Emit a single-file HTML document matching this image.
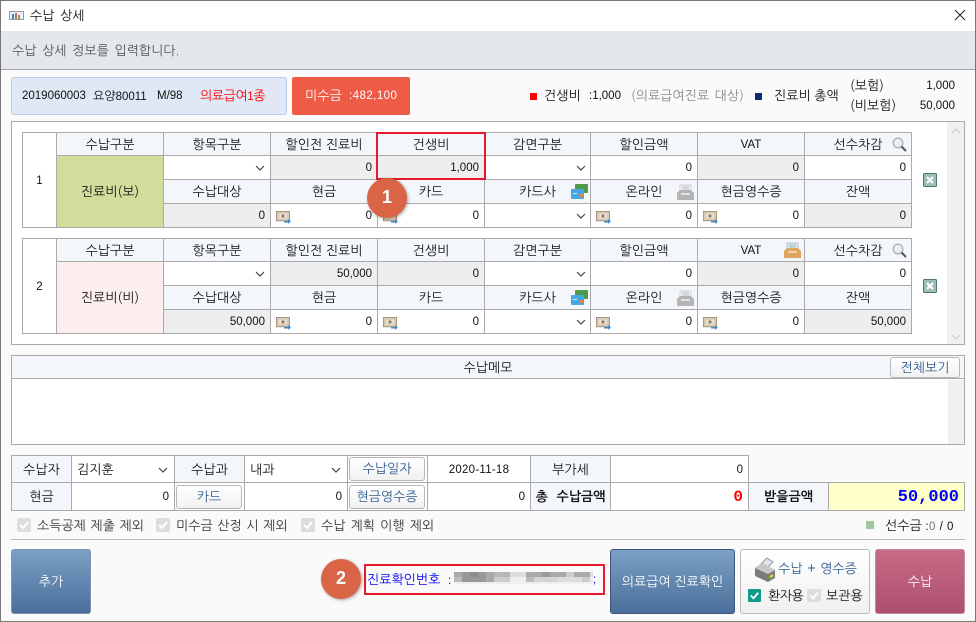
<!DOCTYPE html>
<html lang="ko"><head><meta charset="utf-8">
<style>
*{box-sizing:border-box}
html,body{margin:0;padding:0;width:976px;height:622px;overflow:hidden;background:#fafafa}
body{position:relative;font-family:"NanumGothic","Noto Sans CJK KR","Liberation Sans",sans-serif;font-size:13px;color:#111}
.t{position:absolute;white-space:nowrap;line-height:16px}
.b{position:absolute}
.n{font-family:"Liberation Sans",sans-serif;font-size:11.5px}
table{position:absolute;border-collapse:collapse;table-layout:fixed;background:#fff}
td{border:1px solid #aaa;padding:1px 0 0;text-align:center;position:relative;line-height:16px;white-space:nowrap;overflow:visible}
td.h{background:#f3f6fa}
td.g{background:#eee}
td.r{text-align:right;padding-right:5px;font-family:"Liberation Sans",sans-serif;font-size:11.5px}
svg{position:absolute;overflow:visible}
.btn{position:absolute;background:linear-gradient(#fff,#f1f1f1);border:1px solid #b8b8b8;border-radius:3px;color:#2f5a8e;text-align:center}
.big{position:absolute;top:549px;height:65px;border-radius:3px;color:#fff;text-align:center;line-height:63px}
.cb{position:absolute;width:14px;height:14px;background:#ddd;border-radius:2px}
</style></head>
<body>
<svg width="0" height="0" style="position:absolute">
<defs>
<symbol id="chev" viewBox="0 0 10 6"><path d="M1 1l4 4 4-4" fill="none" stroke="#444" stroke-width="1.2"/></symbol>
<symbol id="money" viewBox="0 0 15 13"><rect x=".4" y=".4" width="13.2" height="9.4" fill="#d6c8b2" stroke="#9c8b76" stroke-width=".8"/><rect x="3" y="2.5" width="8" height="5" fill="#e8e0d0"/><circle cx="7" cy="5" r="1.6" fill="#8f7f6d"/><path d="M8 10h4V8l3 2.6-3 2.2v-1.3H8z" fill="#3b8ad6"/></symbol>
<symbol id="card" viewBox="0 0 17 16"><rect x="4" y="0" width="13" height="9" fill="#4f9a4a" rx="1"/><rect x="0" y="5" width="13" height="10" fill="#49a6e6" rx="1"/><rect x="8" y="10" width="4" height="3" fill="#e8843a"/><rect x="2" y="9" width="4" height="1" fill="#d5ecfa"/></symbol>
<symbol id="tray" viewBox="0 0 17 17"><path d="M3 1h11v8H3z" fill="#f2f2f2" stroke="#c4c4c4" stroke-width=".7"/><path d="M5 3h7M5 5h7" stroke="#bbb"/><path d="M0 9l3-3h11l3 3v7H0z" fill="#b4b4b4"/><path d="M4 9h9v2H4z" fill="#e2e2e2"/></symbol>
<symbol id="tray2" viewBox="0 0 17 17"><path d="M3 1h11v8H3z" fill="#dfeeea" stroke="#aac" stroke-width=".7"/><path d="M5 3h7M5 5h7" stroke="#9bb"/><path d="M0 9l3-3h11l3 3v7H0z" fill="#dfa560"/><path d="M4 9h9v2H4z" fill="#f4d3a6"/></symbol>
<symbol id="mag" viewBox="0 0 15 15"><circle cx="6" cy="6" r="4.8" fill="#e8f0f6" stroke="#a8b4b4" stroke-width="1.3"/><path d="M9.5 9.5l4.5 4.5" stroke="#555" stroke-width="2"/></symbol>
<symbol id="del" viewBox="0 0 14 14"><rect x=".5" y=".5" width="13" height="13" fill="#9dbdb8" stroke="#4f736e" rx="1"/><path d="M4 4l6 6M10 4l-6 6" stroke="#fff" stroke-width="2.2"/></symbol>
<symbol id="chk" viewBox="0 0 14 14"><path d="M3 7l3 3 5-6" fill="none" stroke="#fff" stroke-width="2"/></symbol>
</defs>
</svg>

<!-- window -->
<div class="b" style="left:0;top:31px;width:976px;height:39px;background:#e4e7ec;border-bottom:1px solid #a5a5a5"></div>
<div class="b" style="left:0;top:0;width:976px;height:31px;background:#fff"></div>
<svg style="left:9px;top:11px" width="16" height="9"><rect x=".5" y=".5" width="14" height="8" fill="#eef" stroke="#999"/><rect x="3" y="3" width="2" height="5" fill="#4a7fb5"/><rect x="6" y="2" width="2" height="6" fill="#c96a5a"/><rect x="9" y="4" width="2" height="4" fill="#6aa56a"/></svg>
<div class="t" style="left:30px;top:8px;word-spacing:2px">수납 상세</div>
<svg style="left:955px;top:10px" width="10" height="10"><path d="M0 0l10 10M10 0L0 10" stroke="#222" stroke-width="1"/></svg>
<div class="t" style="left:12px;top:43px;color:#555;word-spacing:2px">수납 상세 정보를 입력합니다.</div>

<!-- patient -->
<div class="b" style="left:11px;top:77px;width:276px;height:38px;background:#dfe8f4;border:1px solid #b8cde6;border-radius:3px"></div>
<div class="t n" style="left:22px;top:88px">2019060003</div>
<div class="t" style="left:93px;top:88px;font-size:12px">요양<span class="n">80011</span></div>
<div class="t n" style="left:157px;top:88px">M/98</div>
<div class="t" style="left:200px;top:88px;color:#f00;letter-spacing:-.4px">의료급여<span class="n">1</span>종</div>
<div class="b" style="left:292px;top:77px;width:118px;height:38px;background:#ee5b47;border-radius:2px"></div>
<div class="t" style="left:305px;top:88px;color:#fff">미수금</div>
<div class="t n" style="left:349px;top:88px;color:#fff;letter-spacing:.45px">:482,100</div>

<!-- legend -->
<div class="b" style="left:530px;top:93px;width:7px;height:7px;background:#f00"></div>
<div class="t" style="left:544px;top:88px">건생비</div>
<div class="t n" style="left:589px;top:88px">:1,000</div>
<div class="t" style="left:631px;top:88px;color:#888;word-spacing:2px">(의료급여진료 대상)</div>
<div class="b" style="left:755px;top:93px;width:7px;height:7px;background:#0a2f70"></div>
<div class="t" style="left:774px;top:88px">진료비 총액</div>
<div class="t" style="left:850px;top:78px">(보험)</div>
<div class="t n" style="left:925px;top:78px;width:30px;text-align:right">1,000</div>
<div class="t" style="left:850px;top:98px">(비보험)</div>
<div class="t n" style="left:915px;top:98px;width:40px;text-align:right">50,000</div>

<!-- grid panel -->
<div class="b" style="left:11px;top:121px;width:954px;height:224px;background:#fff;border:1px solid #aaa"></div>
<div class="b" style="left:947px;top:122px;width:17px;height:222px;background:#f0f0f0"></div>
<svg style="left:952px;top:128px" width="8" height="6"><path d="M0 5l4-4 4 4" fill="none" stroke="#ccc"/></svg>
<svg style="left:952px;top:334px" width="8" height="6"><path d="M0 1l4 4 4-4" fill="none" stroke="#ccc"/></svg>

<table style="left:22px;top:132px;width:890px">
<colgroup><col style="width:34px"><col style="width:107px"><col style="width:107px"><col style="width:107px"><col style="width:107px"><col style="width:106px"><col style="width:107px"><col style="width:107px"><col style="width:107px"></colgroup>
<tr style="height:23px"><td rowspan="4" class="n">1</td><td class="h">수납구분</td><td class="h">항목구분</td><td class="h">할인전 진료비</td><td class="h">건생비</td><td class="h">감면구분</td><td class="h">할인금액</td><td class="h n">VAT</td><td class="h">선수차감<svg style="left:87px;top:4px" width="15" height="15"><use href="#mag"/></svg></td></tr>
<tr style="height:24px"><td rowspan="3" style="background:#d3dc9c">진료비(보)</td><td><svg style="left:91px;top:9px" width="10" height="6"><use href="#chev"/></svg></td><td class="g r">0</td><td class="g r">1,000</td><td><svg style="left:91px;top:9px" width="10" height="6"><use href="#chev"/></svg></td><td class="r">0</td><td class="g r">0</td><td class="r">0</td></tr>
<tr style="height:24px"><td class="h">수납대상</td><td class="h">현금</td><td class="h">카드</td><td class="h">카드사<svg style="left:86px;top:4px" width="17" height="16"><use href="#card"/></svg></td><td class="h">온라인<svg style="left:86px;top:4px" width="17" height="17"><use href="#tray"/></svg></td><td class="h">현금영수증</td><td class="h">잔액</td></tr>
<tr style="height:24px"><td class="g r">0</td><td class="r">0<svg style="left:5px;top:7px" width="15" height="13"><use href="#money"/></svg></td><td class="r">0<svg style="left:5px;top:7px" width="15" height="13"><use href="#money"/></svg></td><td><svg style="left:91px;top:9px" width="10" height="6"><use href="#chev"/></svg></td><td class="r">0<svg style="left:5px;top:7px" width="15" height="13"><use href="#money"/></svg></td><td class="r">0<svg style="left:5px;top:7px" width="15" height="13"><use href="#money"/></svg></td><td class="g r">0</td></tr>
</table>
<svg style="left:923px;top:173px" width="14" height="14"><use href="#del"/></svg>

<table style="left:22px;top:238px;width:890px">
<colgroup><col style="width:34px"><col style="width:107px"><col style="width:107px"><col style="width:107px"><col style="width:107px"><col style="width:106px"><col style="width:107px"><col style="width:107px"><col style="width:107px"></colgroup>
<tr style="height:23px"><td rowspan="4" class="n">2</td><td class="h">수납구분</td><td class="h">항목구분</td><td class="h">할인전 진료비</td><td class="h">건생비</td><td class="h">감면구분</td><td class="h">할인금액</td><td class="h"><span class="n">VAT</span><svg style="left:86px;top:3px" width="17" height="17"><use href="#tray2"/></svg></td><td class="h">선수차감<svg style="left:87px;top:4px" width="15" height="15"><use href="#mag"/></svg></td></tr>
<tr style="height:24px"><td rowspan="3" style="background:#fdeeee">진료비(비)</td><td><svg style="left:91px;top:9px" width="10" height="6"><use href="#chev"/></svg></td><td class="g r">50,000</td><td class="g r">0</td><td><svg style="left:91px;top:9px" width="10" height="6"><use href="#chev"/></svg></td><td class="r">0</td><td class="g r">0</td><td class="r">0</td></tr>
<tr style="height:24px"><td class="h">수납대상</td><td class="h">현금</td><td class="h">카드</td><td class="h">카드사<svg style="left:86px;top:4px" width="17" height="16"><use href="#card"/></svg></td><td class="h">온라인<svg style="left:86px;top:4px" width="17" height="17"><use href="#tray"/></svg></td><td class="h">현금영수증</td><td class="h">잔액</td></tr>
<tr style="height:24px"><td class="g r">50,000</td><td class="r">0<svg style="left:5px;top:7px" width="15" height="13"><use href="#money"/></svg></td><td class="r">0<svg style="left:5px;top:7px" width="15" height="13"><use href="#money"/></svg></td><td><svg style="left:91px;top:9px" width="10" height="6"><use href="#chev"/></svg></td><td class="r">0<svg style="left:5px;top:7px" width="15" height="13"><use href="#money"/></svg></td><td class="r">0<svg style="left:5px;top:7px" width="15" height="13"><use href="#money"/></svg></td><td class="g r">50,000</td></tr>
</table>
<svg style="left:923px;top:279px" width="14" height="14"><use href="#del"/></svg>

<!-- highlight 1 -->
<div class="b" style="left:376px;top:132px;width:110px;height:48px;border:2px solid #e8192c"></div>
<div class="b" style="left:367px;top:178px;width:40px;height:40px;border-radius:50%;background:#d96546;box-shadow:1px 1px 3px rgba(0,0,0,.35);color:#fff;font:bold 18px/38px 'Liberation Sans',sans-serif;text-align:center">1</div>

<!-- memo -->
<div class="b" style="left:11px;top:355px;width:954px;height:90px;background:#fff;border:1px solid #aaa"></div>
<div class="b" style="left:12px;top:356px;width:952px;height:23px;background:#f3f6fa;border-bottom:1px solid #aaa;text-align:center;line-height:23px">수납메모</div>
<div class="btn" style="left:890px;top:357px;width:70px;height:21px;line-height:19px">전체보기</div>
<div class="b" style="left:948px;top:380px;width:16px;height:64px;background:#f0f0f0"></div>

<!-- bottom table -->
<table style="left:11px;top:455px;width:953px;background:transparent">
<colgroup><col style="width:60px"><col style="width:103px"><col style="width:70px"><col style="width:103px"><col style="width:80px"><col style="width:103px"><col style="width:80px"><col style="width:138px"><col style="width:80px"><col style="width:136px"></colgroup>
<tr style="height:27px"><td class="h">수납자</td><td style="background:#fff;text-align:left;padding-left:5px">김지훈<svg style="left:86px;top:11px" width="10" height="6"><use href="#chev"/></svg></td><td class="h">수납과</td><td style="background:#fff;text-align:left;padding-left:5px">내과<svg style="left:86px;top:11px" width="10" height="6"><use href="#chev"/></svg></td><td style="background:#fff"><div class="btn" style="left:1px;top:1px;width:76px;height:24px;line-height:22px">수납일자</div></td><td class="n" style="background:#fff;letter-spacing:.25px">2020-11-18</td><td class="h">부가세</td><td class="r" style="background:#fff">0</td><td colspan="2" style="border-top:0;border-right:0"></td></tr>
<tr style="height:28px"><td class="h">현금</td><td class="r" style="background:#fff">0</td><td style="background:#fff"><div class="btn" style="left:1px;top:2px;width:66px;height:24px;line-height:22px">카드</div></td><td class="r" style="background:#fff">0</td><td style="background:#fff"><div class="btn" style="left:1px;top:2px;width:76px;height:24px;line-height:22px">현금영수증</div></td><td class="r" style="background:#fff">0</td><td class="h" style="font-weight:bold;word-spacing:5px">총 수납금액</td><td class="r" style="background:#fff;color:#f00;font:bold 16px 'Liberation Mono',monospace">0</td><td class="h" style="font-weight:bold">받을금액</td><td class="r" style="background:#ffffc8;color:#00f;font:bold 17px 'Liberation Mono',monospace">50,000</td></tr>
</table>

<!-- checks -->
<div class="cb" style="left:17px;top:518px"><svg width="14" height="14"><use href="#chk"/></svg></div>
<div class="t" style="left:37px;top:518px;color:#333;word-spacing:1px">소득공제 제출 제외</div>
<div class="cb" style="left:156px;top:518px"><svg width="14" height="14"><use href="#chk"/></svg></div>
<div class="t" style="left:176px;top:518px;color:#333;word-spacing:1px">미수금 산정 시 제외</div>
<div class="cb" style="left:301px;top:518px"><svg width="14" height="14"><use href="#chk"/></svg></div>
<div class="t" style="left:321px;top:518px;color:#333;word-spacing:1.5px">수납 계획 이행 제외</div>
<div class="b" style="left:866px;top:521px;width:8px;height:8px;background:#9cc89c"></div>
<div class="t" style="left:885px;top:518px">선수금 <span class="n" style="letter-spacing:.5px">:<span style="color:#777">0</span> / 0</span></div>
<div class="b" style="left:11px;top:539px;width:954px;height:1px;background:#bbb"></div>

<!-- bottom buttons -->
<div class="big" style="left:11px;width:80px;background:linear-gradient(#7ba0c6,#4a6f9a);border:1px solid #7d95b0">추가</div>
<div class="b" style="left:321px;top:559px;width:40px;height:40px;border-radius:50%;background:#d96546;box-shadow:1px 1px 3px rgba(0,0,0,.35);color:#fff;font:bold 18px/38px 'Liberation Sans',sans-serif;text-align:center">2</div>
<div class="b" style="left:364px;top:564px;width:241px;height:31px;border:2px solid #e8192c"></div>
<div class="t" style="left:367px;top:572px;color:#00f;word-spacing:4px">진료확인번호 <span class="n">:</span></div>
<div class="b" style="left:454px;top:572px;width:139px;height:5px;background:linear-gradient(90deg,#aaa 0 8px,#999 8px 16px,#8c8c8c 16px 24px,#999 24px 32px,#aaa 32px 40px,#b8b8b8 40px 56px,#ddd 56px 72px,#aaa 72px 88px,#999 88px 96px,#aaa 96px 112px,#ccc 112px 120px,#aaa 120px 136px,#ddd 136px)"></div>
<div class="b" style="left:454px;top:577px;width:139px;height:5px;background:linear-gradient(90deg,#bbb 0 8px,#999 8px 32px,#aaa 32px 40px,#ccc 40px 56px,#eee 56px 72px,#bbb 72px 80px,#d4d4d4 80px 104px,#ddd 104px 128px,#ccc 128px 136px,#eee 136px)"></div>
<div class="b" style="left:454px;top:582px;width:139px;height:2px;background:#f0efef"></div>
<div class="t n" style="left:593px;top:572px;color:#00f">;</div>
<div class="big" style="left:610px;width:125px;background:linear-gradient(#7ba0c6,#4a6f9a);border:1px solid #3f5878">의료급여 진료확인</div>
<div class="b" style="left:740px;top:549px;width:130px;height:65px;background:linear-gradient(#fff,#f0f0f0);border:1px solid #bbb;border-radius:3px"></div>
<svg style="left:754px;top:557px" width="25" height="26"><path d="M6 8L13 1l6 4-6 6z" fill="#dfe6ee" stroke="#999"/><path d="M1 11l7-5 13 7v8l-7 4-13-6z" fill="#7b7b7b"/><path d="M1 11l7-5 13 7-7 4z" fill="#c8c8c8"/><path d="M14 20l6-3v3l-5 3z" fill="#5aa34a"/><path d="M16 20l3-2" stroke="#f0d040" stroke-width="2"/></svg>
<div class="t" style="left:778px;top:561px;color:#2f5a8e;word-spacing:1px">수납 + 영수증</div>
<div class="b" style="left:748px;top:589px;width:13px;height:13px;background:#0f9a8a;border-radius:1px"><svg width="13" height="13"><use href="#chk"/></svg></div>
<div class="t" style="left:768px;top:588px;letter-spacing:-.5px">환자용</div>
<div class="cb" style="left:807px;top:589px;height:13px"><svg width="14" height="13"><use href="#chk"/></svg></div>
<div class="t" style="left:826px;top:588px">보관용</div>
<div class="big" style="left:875px;width:90px;background:linear-gradient(#c76a85,#ad5070);border:1px solid #c08a9c">수납</div>

<!-- window border -->
<div class="b" style="left:0;top:0;width:976px;height:622px;border:1px solid #777;pointer-events:none"></div>
</body></html>
